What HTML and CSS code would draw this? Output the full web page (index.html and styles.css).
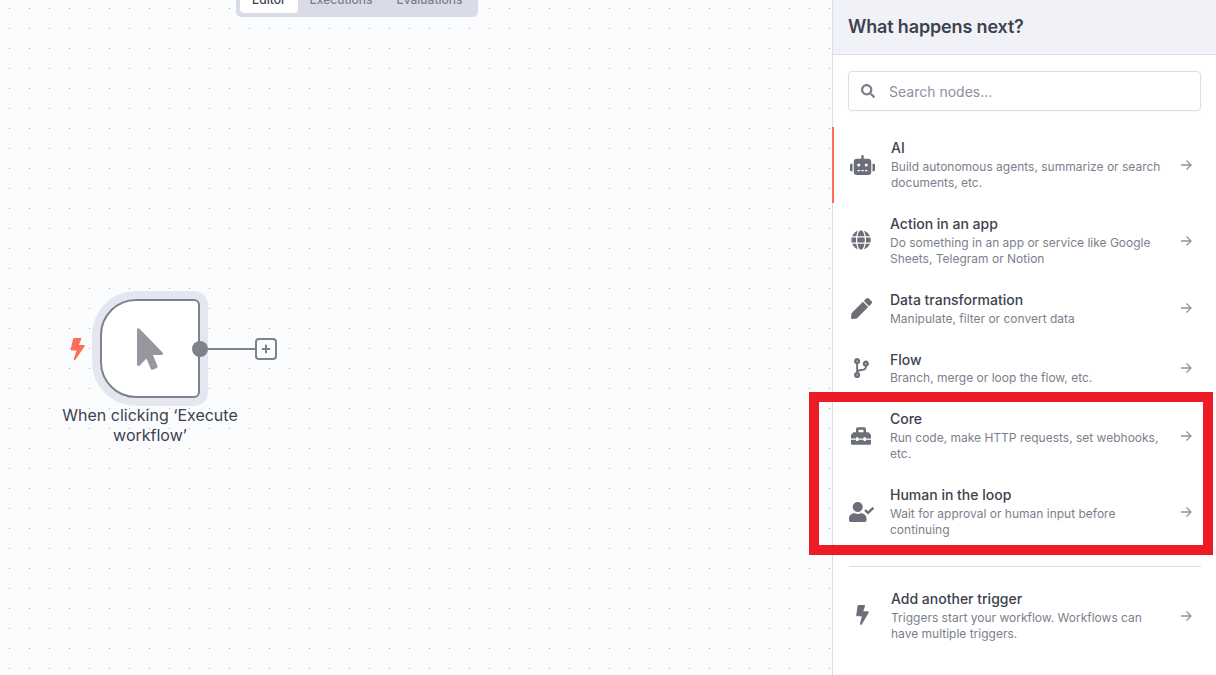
FILE: index.html
```html
<!DOCTYPE html>
<html lang="en">
<head>
<meta charset="utf-8">
<title>What happens next?</title>
<link rel="stylesheet" href="styles.css">
</head>
<body>
<div class="app">
  <main class="canvas">
    <div class="tabs">
      <span class="tab tab-active">Editor</span>
      <span class="tab">Executions</span>
      <span class="tab">Evaluations</span>
    </div>
    <svg class="trigger-bolt" viewBox="0 0 320 512"><path d="M296 160H180.600l42.600-129.800C227.200 15 215.700 0 200 0H56C44 0 33.800 8.900 32.200 20.800l-32 240C-1.700 275.200 9.500 288 24 288h118.700L96.600 482.500c-3.600 15.200 8 29.500 23.300 29.500 8.400 0 16.400-4.400 20.800-12l176-304c9.300-15.900-2.200-36-20.700-36z"/></svg>
    <div class="node">
      <svg class="node-icon" viewBox="0 0 320 512"><path d="M302.189 329.126H196.105l55.831 135.993c3.889 9.428-.555 19.999-9.444 23.999l-49.165 21.427c-9.165 4-19.443-.571-23.332-9.714l-53.053-129.136-86.664 89.138C18.729 472.71 0 463.554 0 447.977V18.299C0 1.899 19.921-6.096 30.277 5.443l284.412 292.542c11.472 11.179 3.007 31.141-12.5 31.141z"/></svg>
    </div>
    <span class="node-dot"></span>
    <span class="node-line"></span>
    <span class="node-plus"><svg viewBox="0 0 12 12"><path d="M6 1v10M1 6h10"/></svg></span>
    <div class="node-label">When clicking ‘Execute workflow’</div>
  </main>

  <aside class="panel">
    <header class="panel-head"><h1>What happens next?</h1></header>
    <div class="search">
      <svg class="search-icon" viewBox="0 0 512 512"><path d="M505 442.700L405.300 343c-4.500-4.500-10.600-7-17-7H372c27.600-35.300 44-79.700 44-128C416 93.100 322.900 0 208 0S0 93.100 0 208s93.100 208 208 208c48.300 0 92.700-16.400 128-44v16.300c0 6.400 2.500 12.500 7 17l99.700 99.700c9.400 9.400 24.600 9.400 33.900 0l28.300-28.300c9.400-9.400 9.400-24.600.1-34zM208 336c-70.700 0-128-57.200-128-128 0-70.700 57.200-128 128-128 70.700 0 128 57.200 128 128 0 70.700-57.200 128-128 128z"/></svg>
      <span>Search nodes...</span>
    </div>
    <ul class="list">
      <li class="row row-active">
        <span class="row-icon"><svg class="i-wide" viewBox="0 0 640 512"><path d="M32,224H64V416H32A31.96166,31.96166,0,0,1,0,384V256A31.96166,31.96166,0,0,1,32,224Zm512-48V448a64.06328,64.06328,0,0,1-64,64H160a64.06328,64.06328,0,0,1-64-64V176a79.974,79.974,0,0,1,80-80H288V32a32,32,0,0,1,64,0V96H464A79.974,79.974,0,0,1,544,176ZM264,256a40,40,0,1,0-40,40A39.997,39.997,0,0,0,264,256Zm-8,128H192v32h64Zm96,0H288v32h64ZM456,256a40,40,0,1,0-40,40A39.997,39.997,0,0,0,456,256Zm-8,128H384v32h64ZM640,256V384a31.96166,31.96166,0,0,1-32,32H576V224h32A31.96166,31.96166,0,0,1,640,256Z"/></svg></span>
        <div class="row-text"><div class="row-title">AI</div><div class="row-desc">Build autonomous agents, summarize or search documents, etc.</div></div>
        <svg class="arrow" viewBox="0 0 12 12"><path d="M1 6h10M6.500 1.500 11 6l-4.500 4.500"/></svg>
      </li>
      <li class="row">
        <span class="row-icon"><svg class="i-std" viewBox="0 0 496 512"><path d="M336.500 160C322 70.700 287.800 8 248 8s-74 62.700-88.500 152h177zM152 256c0 22.200 1.200 43.500 3.300 64h185.300c2.100-20.500 3.300-41.800 3.300-64s-1.200-43.500-3.300-64H155.300c-2.100 20.500-3.300 41.800-3.300 64zm324.700-96c-28.600-67.900-86.500-120.400-158-141.600 24.400 33.800 41.200 84.700 50 141.600h108zM177.200 18.400C105.800 39.600 47.800 92.100 19.300 160h108c8.700-56.900 25.500-107.800 49.900-141.600zM487.400 192H372.700c2.100 21 3.300 42.500 3.300 64s-1.200 43-3.300 64h114.600c5.500-20.500 8.600-41.800 8.600-64s-3.100-43.500-8.500-64zM120 256c0-21.500 1.200-43 3.300-64H8.600C3.200 212.500 0 233.800 0 256s3.200 43.500 8.600 64h114.600c-2-21-3.200-42.500-3.200-64zm39.500 96c14.500 89.300 48.700 152 88.500 152s74-62.700 88.500-152h-177zm159.300 141.600c71.400-21.200 129.400-73.700 158-141.600h-108c-8.800 56.900-25.600 107.800-50 141.600zM19.300 352c28.600 67.900 86.500 120.400 158 141.600-24.400-33.800-41.200-84.700-50-141.600h-108z"/></svg></span>
        <div class="row-text"><div class="row-title">Action in an app</div><div class="row-desc">Do something in an app or service like Google Sheets, Telegram or Notion</div></div>
        <svg class="arrow" viewBox="0 0 12 12"><path d="M1 6h10M6.500 1.500 11 6l-4.500 4.500"/></svg>
      </li>
      <li class="row">
        <span class="row-icon"><svg class="i-pen" viewBox="0 0 512 512"><path d="M290.740 93.240l128.020 128.020-277.990 277.990-114.140 12.600C11.350 513.540-1.560 500.620.14 485.340l12.700-114.220 277.900-277.880zm207.200-19.060l-60.110-60.110c-18.750-18.750-49.160-18.750-67.910 0l-56.550 56.550 128.020 128.020 56.550-56.550c18.750-18.760 18.750-49.160 0-67.910z"/></svg></span>
        <div class="row-text"><div class="row-title">Data transformation</div><div class="row-desc">Manipulate, filter or convert data</div></div>
        <svg class="arrow" viewBox="0 0 12 12"><path d="M1 6h10M6.500 1.500 11 6l-4.500 4.500"/></svg>
      </li>
      <li class="row">
        <span class="row-icon"><svg class="i-branch" viewBox="0 0 384 512"><path d="M384 144c0-44.200-35.800-80-80-80s-80 35.800-80 80c0 36.400 24.300 67.100 57.500 76.800-.6 16.100-4.200 28.500-11 36.900-15.400 19.200-49.300 22.400-85.200 25.700-28.200 2.600-57.400 5.400-81.300 16.900v-144c32.500-10.200 56-40.500 56-76.300 0-44.200-35.800-80-80-80S0 35.800 0 80c0 35.800 23.500 66.100 56 76.300v199.300C23.500 365.900 0 396.200 0 432c0 44.200 35.800 80 80 80s80-35.800 80-80c0-34-21.200-63.100-51.200-74.600 3.100-5.200 7.800-9.800 14.900-13.400 16.200-8.200 40.400-10.400 66.100-12.800 42.200-3.900 90-8.400 118.200-43.400 14-17.400 21.100-39.800 21.600-67.900 31.600-10.800 54.400-40.700 54.400-75.900zM80 64c8.800 0 16 7.200 16 16s-7.200 16-16 16-16-7.200-16-16 7.200-16 16-16zm0 384c-8.800 0-16-7.200-16-16s7.200-16 16-16 16 7.200 16 16-7.200 16-16 16zm224-320c8.800 0 16 7.200 16 16s-7.200 16-16 16-16-7.200-16-16 7.200-16 16-16z"/></svg></span>
        <div class="row-text"><div class="row-title">Flow</div><div class="row-desc">Branch, merge or loop the flow, etc.</div></div>
        <svg class="arrow" viewBox="0 0 12 12"><path d="M1 6h10M6.500 1.500 11 6l-4.500 4.500"/></svg>
      </li>
      <li class="row">
        <span class="row-icon"><svg class="i-std" viewBox="0 0 512 512"><path d="M502.630 214.630l-45.250-45.250c-6-6-14.140-9.370-22.630-9.370H384V80c0-26.510-21.490-48-48-48H176c-26.510 0-48 21.490-48 48v80H77.250c-8.490 0-16.620 3.370-22.630 9.370L9.370 214.630c-6 6-9.370 14.140-9.370 22.630V320h128v-16c0-8.840 7.160-16 16-16h32c8.840 0 16 7.160 16 16v16h128v-16c0-8.840 7.160-16 16-16h32c8.840 0 16 7.160 16 16v16h128v-82.750c0-8.480-3.370-16.620-9.370-22.620zM320 160H192V96h128v64zm64 208c0 8.840-7.160 16-16 16h-32c-8.840 0-16-7.160-16-16v-16H192v16c0 8.840-7.160 16-16 16h-32c-8.840 0-16-7.160-16-16v-16H0v96c0 17.670 14.330 32 32 32h448c17.670 0 32-14.330 32-32v-96H384v16z"/></svg></span>
        <div class="row-text"><div class="row-title">Core</div><div class="row-desc">Run code, make HTTP requests, set webhooks, etc.</div></div>
        <svg class="arrow" viewBox="0 0 12 12"><path d="M1 6h10M6.500 1.500 11 6l-4.500 4.500"/></svg>
      </li>
      <li class="row">
        <span class="row-icon"><svg class="i-wide" viewBox="0 0 640 512"><path d="M224 256c70.700 0 128-57.300 128-128S294.700 0 224 0 96 57.300 96 128s57.300 128 128 128zm89.600 32h-16.700c-22.200 10.200-46.900 16-72.900 16s-50.600-5.800-72.900-16h-16.700C60.200 288 0 348.200 0 422.400V464c0 26.500 21.500 48 48 48h352c26.500 0 48-21.500 48-48v-41.600c0-74.200-60.200-134.400-134.400-134.400zm323-128.400l-27.800-28.100c-4.600-4.700-12.100-4.700-16.800-.1l-104.800 104-45.500-45.800c-4.600-4.700-12.100-4.700-16.800-.1l-28.100 27.900c-4.700 4.600-4.700 12.100-.1 16.800l81.700 82.300c4.600 4.700 12.100 4.700 16.800.1l141.300-140.200c4.600-4.700 4.700-12.200.1-16.800z"/></svg></span>
        <div class="row-text"><div class="row-title">Human in the loop</div><div class="row-desc">Wait for approval or human input before continuing</div></div>
        <svg class="arrow" viewBox="0 0 12 12"><path d="M1 6h10M6.500 1.500 11 6l-4.500 4.500"/></svg>
      </li>
    </ul>
    <hr class="divider">
    <div class="row row-trigger">
      <span class="row-icon"><svg class="i-bolt" viewBox="0 0 320 512"><path d="M296 160H180.600l42.600-129.800C227.200 15 215.700 0 200 0H56C44 0 33.800 8.900 32.200 20.800l-32 240C-1.700 275.200 9.500 288 24 288h118.700L96.600 482.500c-3.600 15.200 8 29.500 23.300 29.500 8.400 0 16.400-4.400 20.800-12l176-304c9.300-15.900-2.200-36-20.700-36z"/></svg></span>
      <div class="row-text"><div class="row-title">Add another trigger</div><div class="row-desc">Triggers start your workflow. Workflows can have multiple triggers.</div></div>
      <svg class="arrow" viewBox="0 0 12 12"><path d="M1 6h10M6.500 1.500 11 6l-4.500 4.500"/></svg>
    </div>
  </aside>
  <div class="highlight"></div>
</div>
</body>
</html>
```

FILE: styles.css
```css
* { box-sizing: border-box; }
html, body { margin: 0; height: 100%; overflow: hidden; }
body { font-family: Inter, "Liberation Sans", sans-serif; color: #3d424e; background: #fbfcfe; }

.app { position: relative; display: flex; width: 1216px; height: 675px; overflow: hidden; }

.canvas {
  position: relative;
  width: 832px;
  flex: none;
  background-color: #fbfcfe;
  background-image: radial-gradient(circle at 9.5px 8.5px, #aeb1ba 0.6px, transparent 0.8px);
  background-size: 20px 20px;
}

.tabs {
  position: absolute;
  left: 236px;
  top: -18px;
  width: 242px;
  height: 35px;
  display: flex;
  padding: 4px;
  background: #d9dce6;
  border-radius: 5px;
}
.tab { padding: 2px 12px 0; font-size: 12px; line-height: 23px; font-weight: 500; color: #7c808c; white-space: nowrap; }
.tab-active { background: #fff; color: #3d424e; border-radius: 4px; }

.trigger-bolt { position: absolute; left: 70px; top: 338px; width: 15px; height: 22px; fill: #ff6d5a; transform: skewX(-6deg); }

.node {
  position: absolute;
  left: 100px;
  top: 299px;
  width: 100px;
  height: 99px;
  display: flex;
  align-items: center;
  justify-content: center;
  background: #fff;
  border: 2px solid #7f828b;
  border-radius: 36px 6px 6px 36px;
  box-shadow: 0 0 0 8px #e4e7ef;
}
.node-icon { width: 26px; height: 42px; fill: #97989f; }
.node-dot { position: absolute; left: 192px; top: 341px; width: 16px; height: 16px; border-radius: 50%; background: #7f828b; }
.node-line { position: absolute; left: 207px; top: 348px; width: 48px; height: 2px; background: #7f828b; }
.node-plus {
  position: absolute;
  left: 255px;
  top: 338px;
  width: 22px;
  height: 22px;
  display: flex;
  align-items: center;
  justify-content: center;
  background: #fbfcfe;
  border: 2px solid #7f828b;
  border-radius: 4px;
}
.node-plus svg { width: 10px; height: 10px; fill: none; stroke: #7f828b; stroke-width: 2.400; }
.node-label {
  position: absolute;
  left: 50px;
  top: 405px;
  width: 200px;
  font-size: 16px;
  line-height: 20px;
  font-weight: 400;
  text-align: center;
  color: #3d424e;
}

.panel {
  position: relative;
  flex: 1;
  display: flex;
  flex-direction: column;
  background: #fff;
  border-left: 1px solid #d9deeb;
}
.panel-head {
  height: 55px;
  flex: none;
  display: flex;
  align-items: center;
  padding-left: 15px;
  background: #f1f2f8;
  border-bottom: 1px solid #d9deeb;
}
.panel-head h1 { margin: 0; font-size: 18px; line-height: 24px; font-weight: 600; letter-spacing: -0.150px; color: #3d424e; }

.search {
  flex: none;
  display: flex;
  align-items: center;
  gap: 14px;
  height: 40px;
  margin: 16px 15px 16.200px;
  padding-left: 12px;
  border: 1px solid #d9deeb;
  border-radius: 4px;
  background: #fff;
  font-size: 14px;
  color: #8d919c;
  box-shadow: 0 1px 3px rgba(60, 70, 100, 0.04);
}
.search-icon { width: 14px; height: 14px; fill: #7c808c; }

.list { list-style: none; margin: 0; padding: 0; }
.row { display: flex; align-items: center; padding: 11px 24px 12px 16px; }
.row-active { margin-left: -1px; padding-left: 16px; border-left: 2px solid #ff6d5a; }
.row-icon { flex: none; width: 24px; margin-right: 17px; display: flex; align-items: center; justify-content: center; }
.row-icon svg { flex: none; fill: #6c6f79; display: block; }
.i-wide { width: 25px; height: 20px; }
.i-std { width: 20px; height: 20px; }
.i-pen { width: 21px; height: 21px; }
.i-branch { width: 15px; height: 20px; }
.i-bolt { width: 13px; height: 20px; }
.row-text { flex: 1; min-width: 0; padding-right: 9px; }
.row-title { font-size: 14px; line-height: 20px; font-weight: 500; color: #3d424e; }
.row-desc { margin-top: 0.800px; font-size: 12px; line-height: 16px; color: #7c808c; }
.arrow { flex: none; width: 12px; height: 12px; margin-top: 0.600px; fill: none; stroke: #8f929b; stroke-width: 1.300; }

.divider { width: 352px; height: 1px; margin: 16px 0 0 16px; border: 0; background: #d9deeb; flex: none; }
.row-trigger { padding-left: 17px; margin-top: 11px; }

.highlight {
  position: absolute;
  left: 809px;
  top: 392px;
  width: 404px;
  height: 163px;
  border: 10px solid #ed1c24;
  pointer-events: none;
}
```
